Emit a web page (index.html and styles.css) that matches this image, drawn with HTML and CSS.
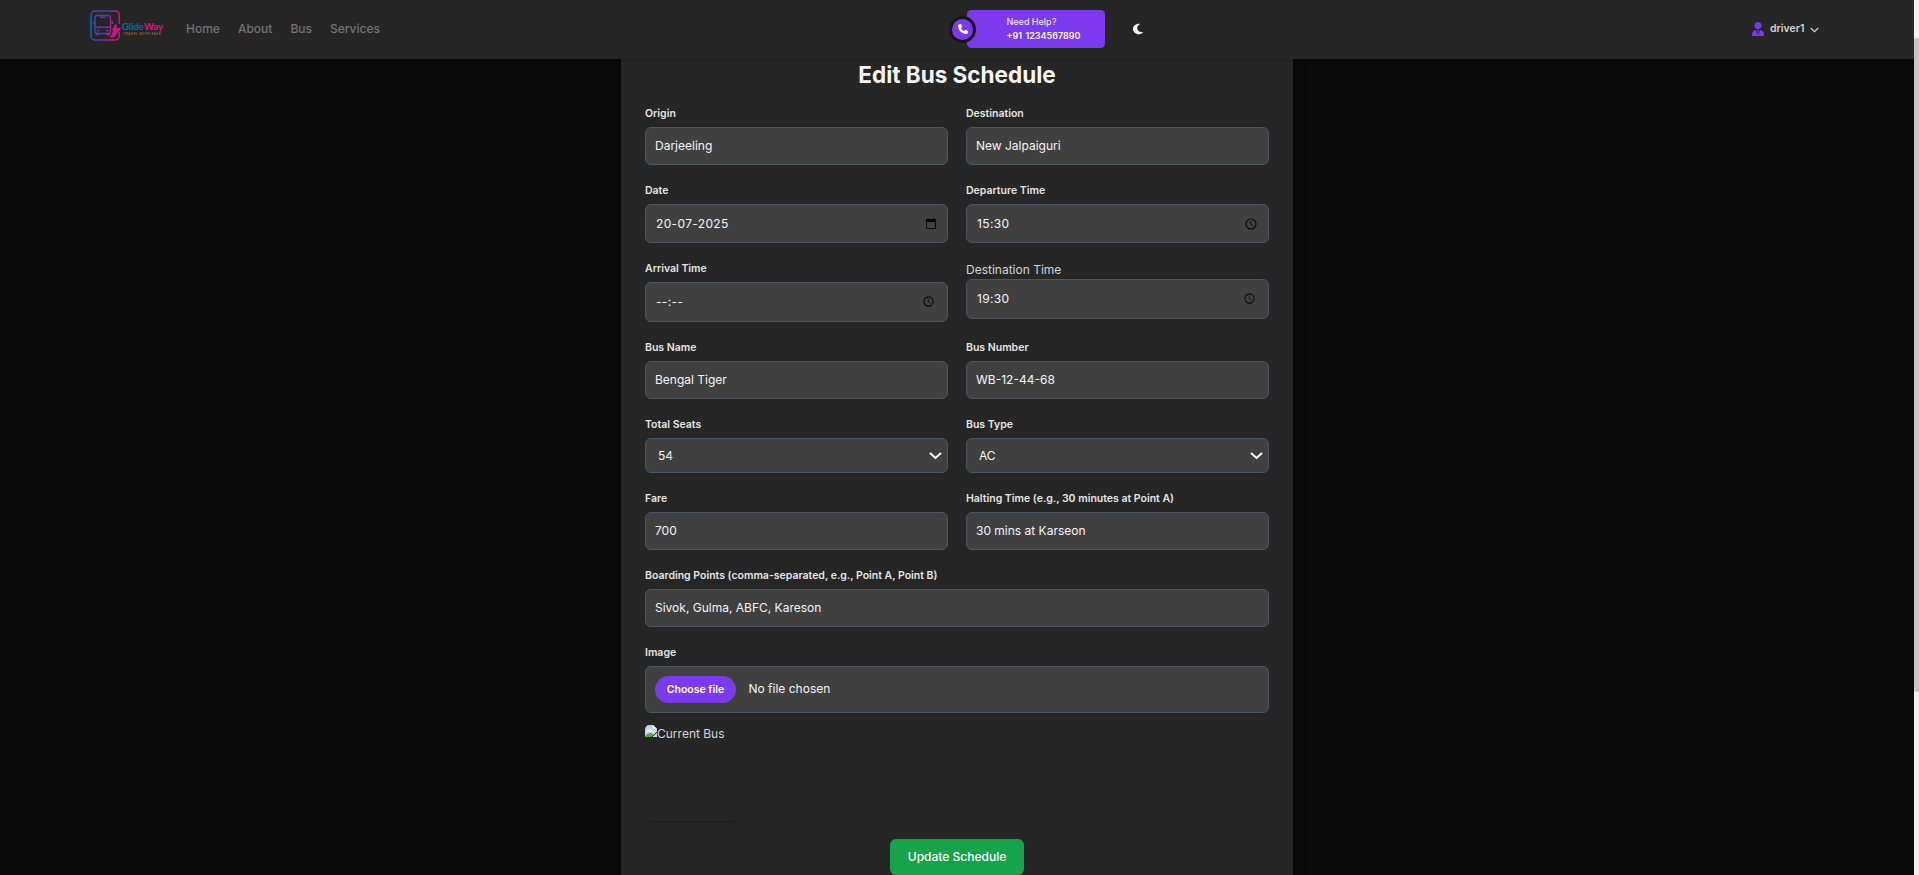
FILE: index.html
```html
<!DOCTYPE html>
<html lang="en">
<head>
<meta charset="utf-8">
<title>GlideWay - Edit Bus Schedule</title>
<link rel="stylesheet" href="styles.css">
</head>
<body>
<div class="page">
  <header class="navbar">
    <div class="brand">
      <svg class="brand-mark" width="32" height="32" viewBox="0 0 32 32" fill="none">
        <defs><linearGradient id="g" x1="0" y1="0" x2="32" y2="6" gradientUnits="userSpaceOnUse"><stop offset="0" stop-color="#0868b8"/><stop offset=".5" stop-color="#5a35b0"/><stop offset=".85" stop-color="#c8187f"/></linearGradient></defs>
        <path d="M29.300 14V5a4 4 0 0 0-4-4H5a4 4 0 0 0-4 4v21a4 4 0 0 0 4 4h20.300a4 4 0 0 0 4-4v-4" stroke="url(#g)" stroke-width="1.500"/>
        <rect x="5" y="5.500" width="15.500" height="18" rx="2.500" stroke="url(#g)" stroke-width="1.300"/>
        <path d="M5 17.300h15.500M10 7.200h5.500M4 11v4M22.300 11v3M5.500 24.500h3.500M16.500 24.500h3.500" stroke="url(#g)" stroke-width="1.400"/>
        <path d="M7 20.500h2.500M16 20.500h2.500" stroke="url(#g)" stroke-width="1.500"/>
        <path d="M20 27.500l3-6.500-1-2 2-2 1-3 2 1-.5 3h5l-5 6.500-3 3z" fill="#c8187f"/>
      </svg>
      <div class="brand-text"><div class="brand-name"><span>Glide</span><b>Way</b></div><div class="brand-tag">TRAVEL WITH EASE</div></div>
    </div>
    <nav class="links"><a>Home</a><a>About</a><a>Bus</a><a>Services</a></nav>
    <div class="help">
      <div class="help-icon"><svg width="10" height="10" viewBox="0 0 512 512" fill="#fff"><path d="M164.900 24.600c-7.700-18.600-28-28.500-47.400-23.200l-88 24C12.100 30.200 0 46 0 64c0 247.400 200.600 448 448 448 18 0 33.800-12.100 38.600-29.500l24-88c5.300-19.400-4.600-39.700-23.200-47.400l-96-40c-16.300-6.800-35.200-2.100-46.300 11.600L304.700 368C234.300 334.700 177.300 277.700 144 207.300l49.300-40.300c13.700-11.200 18.400-30 11.600-46.300z"/></svg></div>
      <div class="help-title">Need Help?</div>
      <div class="help-phone">+91 1234567890</div>
    </div>
    <svg class="moon" width="10" height="12" viewBox="0 0 384 512" preserveAspectRatio="none" fill="#f5f5f5"><path d="M223.500 32C100 32 0 132.300 0 256s100 224 223.500 224c60.600 0 115.500-24.200 155.800-63.400 5-4.900 6.300-12.500 3.100-18.700s-10.100-9.700-17-8.500c-9.800 1.700-19.800 2.600-30.100 2.600-96.900 0-175.500-78.800-175.500-176 0-65.800 36-123.100 89.300-153.300 6.100-3.500 9.200-10.500 7.700-17.300s-7.300-11.900-14.300-12.500c-6.300-.5-12.600-.8-19-.8z"/></svg>
    <div class="user">
      <svg width="12" height="14" viewBox="0 0 12 14" fill="#7c3aed"><circle cx="6" cy="3.500" r="3.500"/><path d="M0 14v-1.500C0 10 1.500 8.300 4 8l1.300 5L5.700 10 5 8h2l-.7 2 .4 3L8 8c2.500.3 4 2 4 4.500V14z"/></svg>
      <span>driver1</span>
      <svg class="caret" width="9" height="6" viewBox="0 0 9 6" fill="none" stroke="#d4d4d4" stroke-width="1.100"><path d="M.8 1l3.700 3.700L8.200 1"/></svg>
    </div>
  </header>
  <main class="card">
    <h1>Edit Bus Schedule</h1>
    <form class="grid">
      <div><label>Origin</label><div class="field">Darjeeling</div></div>
      <div><label>Destination</label><div class="field">New Jalpaiguri</div></div>
      <div><label>Date</label><div class="field date">20-07-2025<svg class="calendar" width="10" height="11" viewBox="0 0 10 11"><path d="M1.500 0h1.200v1h4.600V0h1.200v1H9.500l.5.500v9l-.5.500H.5l-.5-.5v-9L.5 1h1zM1 4v6h8V4z" fill="#0a0a0a" fill-rule="evenodd"/></svg></div></div>
      <div><label>Departure Time</label><div class="field date">15:30<svg class="clock" width="12" height="12" viewBox="0 0 12 12" fill="none" stroke="#0a0a0a" stroke-width="1.200"><circle cx="6" cy="6" r="5"/><path d="M5.800 3v3.300l2.200 1.300" stroke-width=".9"/></svg></div></div>
      <div><label>Arrival Time</label><div class="field time">--:--<svg class="clock inset" width="11" height="11" viewBox="0 0 12 12" fill="none" stroke="#0a0a0a" stroke-width="1.200"><circle cx="6" cy="6" r="5"/><path d="M5.800 3v3.300l2.200 1.300" stroke-width=".8"/></svg></div></div>
      <div><label class="plain">Destination Time</label><div class="field time">19:30<svg class="clock inset" width="11" height="11" viewBox="0 0 12 12" fill="none" stroke="#0a0a0a" stroke-width="1.200"><circle cx="6" cy="6" r="5"/><path d="M5.800 3v3.300l2.200 1.300" stroke-width=".8"/></svg></div></div>
      <div><label>Bus Name</label><div class="field">Bengal Tiger</div></div>
      <div><label>Bus Number</label><div class="field">WB-12-44-68</div></div>
      <div><label>Total Seats</label><div class="field select">54<svg width="13" height="8" viewBox="0 0 13 8" fill="none" stroke="#fff" stroke-width="2"><path d="M1 1l5.500 5L12 1"/></svg></div></div>
      <div><label>Bus Type</label><div class="field select">AC<svg width="13" height="8" viewBox="0 0 13 8" fill="none" stroke="#fff" stroke-width="2"><path d="M1 1l5.500 5L12 1"/></svg></div></div>
      <div><label>Fare</label><div class="field">700</div></div>
      <div><label>Halting Time (e.g., 30 minutes at Point A)</label><div class="field">30 mins at Karseon</div></div>
      <div class="wide"><label>Boarding Points (comma-separated, e.g., Point A, Point B)</label><div class="field">Sivok, Gulma, ABFC, Kareson</div></div>
      <div class="wide"><label>Image</label><div class="field file"><span class="choose">Choose file</span><span>No file chosen</span></div>
        <div class="preview"><svg width="12" height="12" viewBox="0 0 12 12"><path d="M5 0h3l4 4v4l-4 4H0V5q0-5 5-5z" fill="#c6d5f5"/><path d="M2 7q0-2 2-2 1-2 2.500 0Q8 5 8 7z" fill="#fff"/><path d="M0 12v-1q4-5 8-2l1 1-2 2z" fill="#4fae3a"/><path d="M8 0v4h4z" fill="#f5f5f5"/><path d="M12 7.500L7.500 12H12z" fill="#d5d5d5"/><path d="M12 7L7 12" stroke="#262626"/></svg><span>Current Bus</span></div>
      </div>
      <div class="wide actions"><button type="button">Update Schedule</button></div>
    </form>
  </main>
</div>
<div class="scrollbar"><div class="thumb"></div></div>
</body>
</html>
```
FILE: styles.css
```css
* { box-sizing: border-box; }
html { font-size: 12px; }
body { margin: 0; height: 875px; overflow: hidden; display: flex; background: #0a0a0a; color: #e5e5e5; font: 12px/18px Inter, "Liberation Sans", sans-serif; }
.page { width: 1914px; height: 875px; overflow: hidden; }
.navbar { position: relative; z-index: 2; height: 59px; padding: 0 0 1px 90px; display: flex; align-items: center; background: #262626; box-shadow: 0 1px 3px rgba(0,0,0,.2); }
.brand { width: 96px; display: flex; align-items: center; height: 32px; margin-top: -6px; }
.brand-mark { flex: none; }
.brand-text { margin-top: 6px; white-space: nowrap; }
.brand-name { font: 700 9.5px/10px Lato, sans-serif; color: #0868b8; letter-spacing: -.05px; }
.brand-name b { color: #c8187f; font-weight: 900; }
.brand-tag { font: 3.500px/4px Lato, sans-serif; color: #a5803d; letter-spacing: .4px; margin-left: 1px; }
.links { display: flex; gap: 18px; color: #737373; font-weight: 500; width: 781px; }
.help { position: relative; width: 138px; height: 38px; padding: 5px 0 0 39.500px; border-radius: 4.5px; background: #7c3aed; font-size: 9px; line-height: 14px; color: #e5e5e5; white-space: nowrap; }
.help-title { font-weight: 500; }
.help-phone { font-weight: 600; color: #f5f5f5; word-spacing: 1px; }
.help-icon { position: absolute; left: -18px; top: 5.500px; width: 27px; height: 27px; border: 3px solid #171717; border-radius: 50%; background: #7c3aed; display: flex; align-items: center; justify-content: center; }
.moon { margin-left: 28px; }
.user { margin-left: 609px; display: flex; align-items: center; font-size: 10.500px; font-weight: 600; color: #d4d4d4; }
.user span { width: 35px; margin: 0 6px; }
.caret { margin: 2px 0 0 -1px; }
.card { width: 672px; height: 860px; margin: -22px auto 0; padding: 24px; background: #262626; box-shadow: 0 8px 12px rgba(0,0,0,.25); }
h1 { margin: 0 0 18px; font-size: 22.500px; line-height: 27px; font-weight: 700; color: #f5f5f5; text-align: center; }
.grid { display: grid; grid-template-columns: 303px 303px; gap: 18px; }
.wide { grid-column: 1 / -1; }
label { display: block; margin-bottom: 6px; font-size: 10.500px; line-height: 15px; font-weight: 600; color: #e5e5e5; }
label.plain { margin: 0; font-size: 12px; line-height: 18px; font-weight: 400; color: #d4d4d4; }
.field { height: 38px; padding: 0 9px; display: flex; align-items: center; border: 1px solid #4b5563; border-radius: 6px; background: #404040; color: #f5f5f5; }
.field svg { margin-left: auto; }
.date, .time { letter-spacing: .35px; }
.date { height: 38.500px; padding: 1px 11px 0 10px; }
.time { height: 40px; padding-left: 10px; }
.calendar { margin-bottom: 1px; }
.inset { margin-right: 4px; }
.select { height: 35px; padding: 1px 5px 0 12px; }
.file { height: 47px; }
.choose { width: 81px; height: 27px; margin-right: 12.500px; border-radius: 14px; background: #7c3aed; color: #fff; font-size: 10.500px; line-height: 27px; font-weight: 600; text-align: center; }
.preview { width: 96px; height: 96px; margin-top: 12px; display: flex; align-items: flex-start; border-radius: 6px; color: #d4d4d4; box-shadow: 0 2px 3px -1px rgba(0,0,0,.25); white-space: nowrap; }
.actions { display: flex; justify-content: center; }
button { width: 134px; height: 36px; padding: 0; border: 0; border-radius: 6px; background: #16a34a; color: #fff; font: 500 12px/18px Inter, sans-serif; }
.scrollbar { width: 5px; height: 875px; padding-top: 38px; background: #f1f1f1; }
.thumb { height: 654px; border-radius: 3px; background: #c8c8c8; }
```
